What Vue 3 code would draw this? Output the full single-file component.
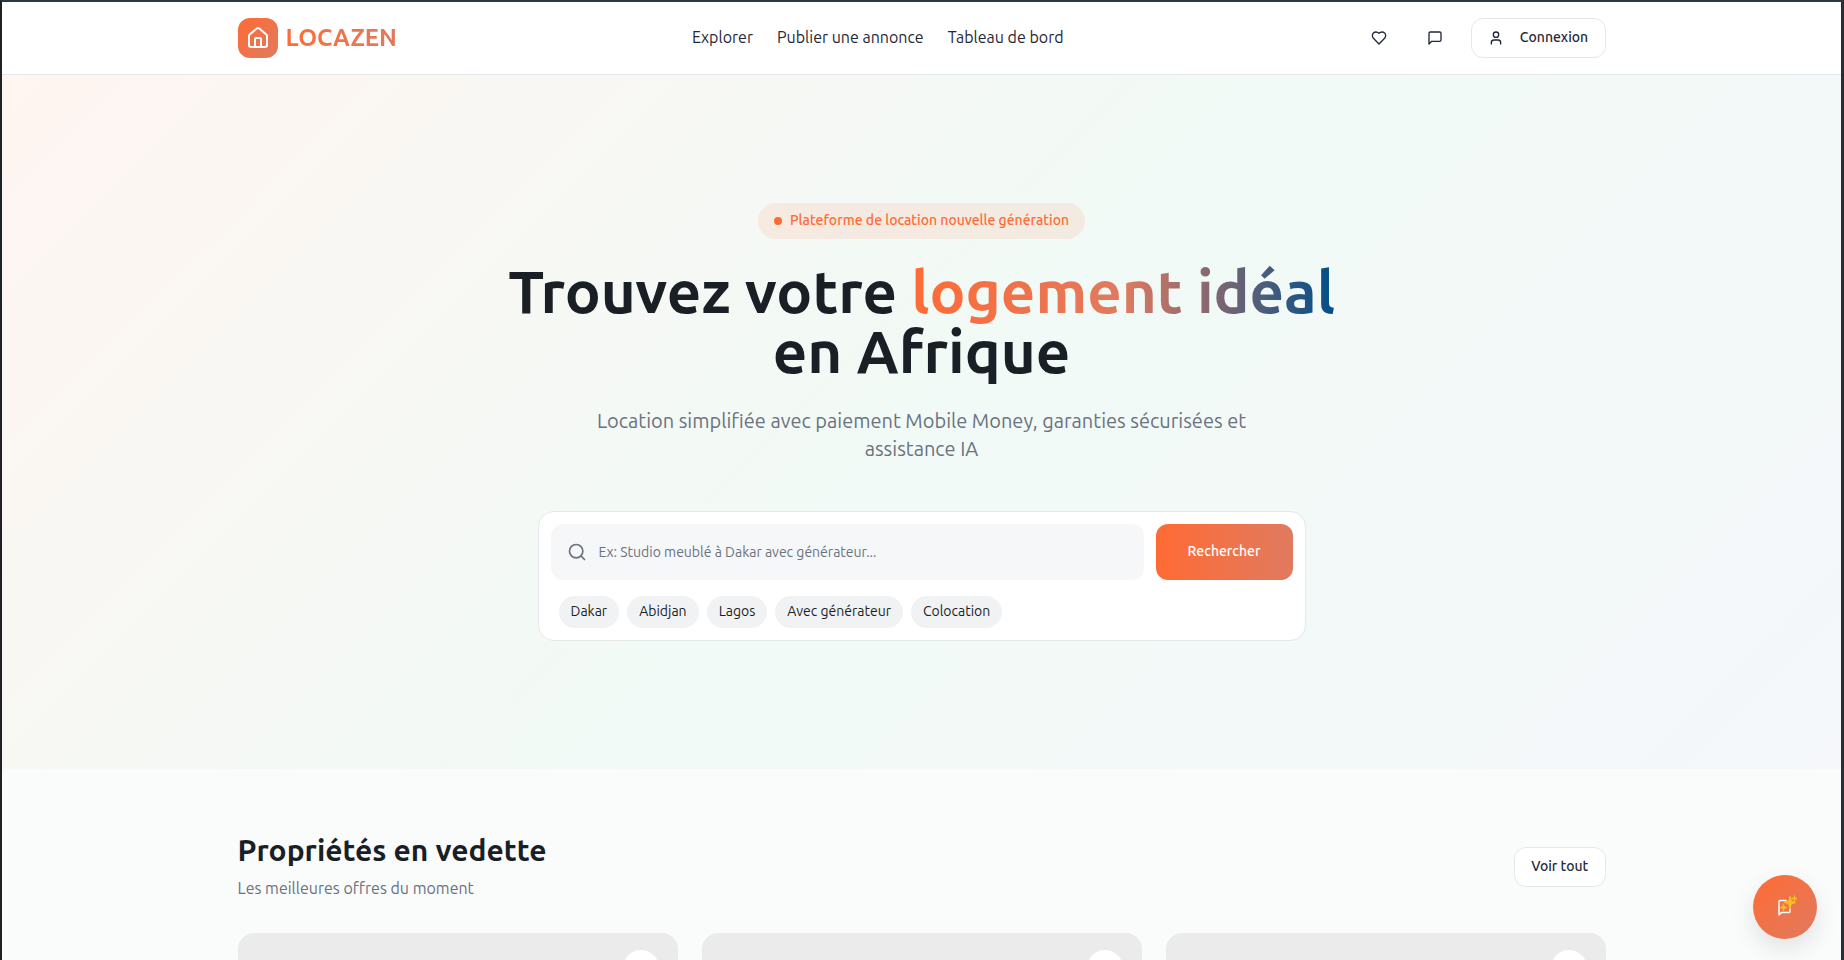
<template>
  <div class="frame">
    <header class="topbar">
      <div class="topbar-inner">
        <a class="brand">
          <span class="brand-icon">
            <svg width="24" height="24" viewBox="0 0 24 24" fill="none" stroke="#fff" stroke-width="2" stroke-linecap="round" stroke-linejoin="round">
              <path d="M15 21v-8a1 1 0 0 0-1-1h-4a1 1 0 0 0-1 1v8" />
              <path d="M3 10a2 2 0 0 1 .709-1.528l7-5.999a2 2 0 0 1 2.582 0l7 5.999A2 2 0 0 1 21 10v9a2 2 0 0 1-2 2H5a2 2 0 0 1-2-2z" />
            </svg>
          </span>
          <span class="brand-name">LOCAZEN</span>
        </a>
        <nav class="nav">
          <a v-for="link in links" :key="link">{{ link }}</a>
        </nav>
        <div class="actions">
          <button class="icon-btn">
            <svg width="16" height="16" viewBox="0 0 24 24" fill="none" stroke="currentColor" stroke-width="2" stroke-linecap="round" stroke-linejoin="round">
              <path d="M19 14c1.49-1.46 3-3.21 3-5.5A5.5 5.5 0 0 0 16.5 3c-1.76 0-3 .5-4.5 2-1.5-1.5-2.74-2-4.5-2A5.5 5.5 0 0 0 2 8.5c0 2.3 1.5 4.05 3 5.5l7 7Z" />
            </svg>
          </button>
          <button class="icon-btn">
            <svg width="16" height="16" viewBox="0 0 24 24" fill="none" stroke="currentColor" stroke-width="2" stroke-linecap="round" stroke-linejoin="round">
              <path d="M21 15a2 2 0 0 1-2 2H7l-4 4V5a2 2 0 0 1 2-2h14a2 2 0 0 1 2 2z" />
            </svg>
          </button>
          <button class="login-btn">
            <svg width="16" height="16" viewBox="0 0 24 24" fill="none" stroke="currentColor" stroke-width="2" stroke-linecap="round" stroke-linejoin="round">
              <path d="M19 21v-2a4 4 0 0 0-4-4H9a4 4 0 0 0-4 4v2" />
              <circle cx="12" cy="7" r="4" />
            </svg>
            <span class="login-text">Connexion</span>
          </button>
        </div>
      </div>
    </header>

    <section class="hero">
      <div class="badge"><span class="dot"></span><span class="badge-text">Plateforme de location nouvelle génération</span></div>
      <h1>Trouvez votre <span class="grad">logement idéal</span><br />en Afrique</h1>
      <p class="lead">Location simplifiée avec paiement Mobile Money, garanties sécurisées et assistance IA</p>
      <div class="search-card">
        <div class="search-row">
          <div class="search-input">
            <svg width="20" height="20" viewBox="0 0 24 24" fill="none" stroke="#6b7280" stroke-width="2" stroke-linecap="round" stroke-linejoin="round">
              <circle cx="11" cy="11" r="8" />
              <path d="m21 21-4.3-4.3" />
            </svg>
            <span>Ex: Studio meublé à Dakar avec générateur...</span>
          </div>
          <button class="search-btn">Rechercher</button>
        </div>
        <div class="chips">
          <span v-for="chip in chips" :key="chip" class="chip">{{ chip }}</span>
        </div>
      </div>
    </section>

    <section class="featured">
      <div class="featured-head">
        <div>
          <h2>Propriétés en vedette</h2>
          <p>Les meilleures offres du moment</p>
        </div>
        <button class="all-btn">Voir tout</button>
      </div>
      <div class="cards">
        <div v-for="n in 3" :key="n" class="card">
          <span class="card-fav"></span>
        </div>
      </div>
    </section>

    <button class="fab">
      <svg width="24" height="24" viewBox="0 0 24 24" fill="none" stroke-linecap="round" stroke-linejoin="round">
        <path d="M17 14v2.500a1 1 0 0 1-1 1H8.500L6 20V6.500a1 1 0 0 1 1-1h6" stroke="#fff" stroke-width="1.500" />
        <path d="M17 1.500l1.400 4.600L23 7.500l-4.600 1.400L17 13.500l-1.400-4.600L11 7.500l4.600-1.400z" fill="#fbbf24" stroke="#fbbf24" stroke-width="1" />
        <path d="M21.500 1v5M19 3.500h5" stroke="#fbbf24" stroke-width="1.400" />
        <path d="M10.500 9l.9 2.600 2.600.9-2.600.9-.9 2.600-.9-2.600-2.600-.9 2.600-.9z" fill="#fbbf24" stroke="#fbbf24" stroke-width=".6" />
      </svg>
    </button>
  </div>
</template>

<script setup>
const links = ['Explorer', 'Publier une annonce', 'Tableau de bord']
const chips = ['Dakar', 'Abidjan', 'Lagos', 'Avec générateur', 'Colocation']
</script>

<style>
html, body {
  margin: 0;
  height: 100%;
  overflow: hidden;
}
</style>

<style scoped>
.frame {
  position: relative;
  height: 960px;
  box-sizing: border-box;
  overflow: hidden;
  border-top: 2px solid #2f3742;
  border-left: 2px solid #1f2124;
  border-right: 3px solid #2b2d30;
  background: #fafbfb;
  font-family: Ubuntu, "Noto Sans", sans-serif;
  color: #1a1f26;
}

.topbar {
  height: 73px;
  box-sizing: border-box;
  background: #fff;
  border-bottom: 1px solid #e5e7eb;
}

.topbar-inner {
  width: 1368px;
  height: 100%;
  box-sizing: border-box;
  padding-bottom: 1px;
  margin: 0 auto;
  display: flex;
  justify-content: space-between;
  align-items: center;
}

.brand {
  display: flex;
  align-items: center;
  gap: 8px;
}

.brand-icon {
  width: 40px;
  height: 40px;
  border-radius: 12px;
  display: flex;
  align-items: center;
  justify-content: center;
  background: linear-gradient(135deg, #ff6b35, #e07a5f);
}

.brand-name {
  font-size: 24px;
  font-weight: 700;
  background: linear-gradient(90deg, #ff6b35, #e07a5f);
  -webkit-background-clip: text;
  background-clip: text;
  color: transparent;
}

.nav {
  display: flex;
  gap: 24px;
  padding-bottom: 2px;
  font-size: 16px;
  color: #1f2937;
}

.actions {
  display: flex;
  justify-content: flex-end;
  align-items: center;
  gap: 16px;
}

.icon-btn {
  width: 40px;
  height: 40px;
  border: 0;
  background: none;
  color: #1f2937;
  display: flex;
  align-items: center;
  justify-content: center;
  padding: 0;
}

.login-btn {
  height: 40px;
  width: 135px;
  box-sizing: border-box;
  border: 1px solid #e5e7eb;
  border-radius: 12px;
  background: #fff;
  color: #1f2937;
  font: inherit;
  font-size: 14px;
  font-weight: 500;
  display: flex;
  align-items: center;
  justify-content: center;
  gap: 16px;
}

.login-text {
  margin-top: -2px;
}

.hero {
  height: 694px;
  box-sizing: border-box;
  padding-top: 128px;
  display: flex;
  flex-direction: column;
  align-items: center;
  background: linear-gradient(135deg, #fff5f1 0%, #f1faf6 50%, #f5f7fa 100%);
}

.badge {
  height: 36px;
  box-sizing: border-box;
  padding: 0 16px;
  border-radius: 18px;
  background: rgba(255, 107, 53, 0.1);
  color: #ff6b35;
  font-size: 14px;
  font-weight: 500;
  display: flex;
  align-items: center;
  gap: 8px;
}

.badge-text {
  margin-top: -2px;
}

.dot {
  width: 8px;
  height: 8px;
  border-radius: 50%;
  background: #ff6b35;
}

h1 {
  margin: 22px 0 0;
  font-size: 60px;
  line-height: 60px;
  font-weight: 700;
  text-align: center;
}

.grad {
  background: linear-gradient(90deg, #ff6b35, #e07a5f 50%, #004e89);
  -webkit-background-clip: text;
  background-clip: text;
  color: transparent;
}

.lead {
  margin: 26px 0 0;
  width: 672px;
  font-size: 20px;
  line-height: 28px;
  text-align: center;
  color: #6b7280;
}

.search-card {
  width: 768px;
  box-sizing: border-box;
  margin-top: 48px;
  padding: 12px;
  background: #fff;
  border: 1px solid #e5e7eb;
  border-radius: 16px;
}

.search-row {
  display: flex;
  gap: 12px;
}

.search-input {
  flex: 1;
  height: 56px;
  box-sizing: border-box;
  padding: 0 16px;
  border-radius: 12px;
  background: #f6f7f9;
  display: flex;
  align-items: center;
  gap: 12px;
  color: #6b7280;
  font-size: 14px;
}

.search-btn {
  width: 137px;
  height: 56px;
  padding: 0 0 2px;
  border: 0;
  border-radius: 12px;
  background: linear-gradient(90deg, #ff6b35, #e07a5f);
  color: #fff;
  font: inherit;
  font-size: 14px;
  font-weight: 500;
}

.chips {
  display: flex;
  gap: 8px;
  margin-top: 16px;
  padding-left: 8px;
}

.chip {
  height: 32px;
  box-sizing: border-box;
  padding: 0 12px 2px;
  border-radius: 16px;
  background: #f1f2f4;
  font-size: 14px;
  display: flex;
  align-items: center;
}

.featured {
  width: 1368px;
  margin: 0 auto;
  padding-top: 63px;
}

.featured-head {
  display: flex;
  justify-content: space-between;
  align-items: center;
  margin-bottom: 33px;
}

h2 {
  margin: 0;
  font-size: 30px;
  line-height: 36px;
  font-weight: 700;
}

.featured-head p {
  margin: 8px 0 0;
  font-size: 16px;
  line-height: 24px;
  color: #6b7280;
}

.all-btn {
  width: 91.4px;
  height: 40px;
  margin-top: 2px;
  padding: 0 0 2px;
  border: 1px solid #e5e7eb;
  border-radius: 12px;
  background: #fff;
  color: #1f2937;
  font: inherit;
  font-size: 14px;
  font-weight: 500;
}

.cards {
  display: grid;
  grid-template-columns: repeat(3, 1fr);
  gap: 24px;
}

.card {
  position: relative;
  height: 256px;
  border-radius: 16px;
  background: #ebebeb;
}

.card-fav {
  position: absolute;
  top: 17px;
  right: 19px;
  width: 36px;
  height: 36px;
  border-radius: 50%;
  background: #fff;
}

.fab {
  position: absolute;
  right: 24px;
  bottom: 21px;
  width: 64px;
  height: 64px;
  border: 0;
  padding: 0;
  border-radius: 50%;
  background: linear-gradient(135deg, #ff6b35, #e07a5f);
  box-shadow: 0 10px 25px rgba(0, 0, 0, 0.1);
  display: flex;
  align-items: center;
  justify-content: center;
}
</style>
